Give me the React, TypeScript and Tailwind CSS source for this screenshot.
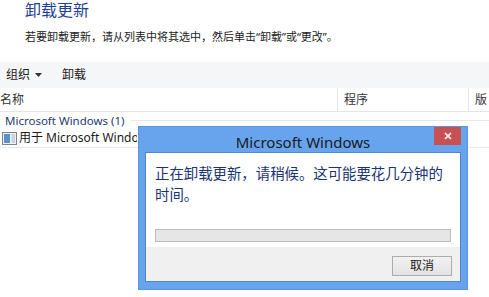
import React from 'react';

const ui = { fontFamily: '"Noto Sans", "Noto Sans CJK SC", sans-serif' };

function UpdateIcon() {
  return (
    <svg width="15" height="13" viewBox="0 0 15 13">
      <rect x="0.5" y="0.5" width="14" height="12" fill="#eef2f6" stroke="#7b8590" />
      <rect x="2" y="2" width="6" height="9" fill="#5d8fc9" />
      <rect x="9.5" y="2" width="3.5" height="9" fill="#c9d3dd" />
    </svg>
  );
}

export default function App() {
  return (
    <div className="relative w-[489px] h-[297px] overflow-hidden bg-white text-[#1a1a1a]" style={ui}>
      {/* page heading */}
      <div className="pl-[25px]">
        <h1 className="text-[16px] leading-[20px] text-[#1e3f96]">卸载更新</h1>
        <p className="mt-[9px] text-[11px] leading-[16px] text-[#222]">
          若要卸载更新，请从列表中将其选中，然后单击“卸载”或“更改”。
        </p>
      </div>

      {/* toolbar */}
      <div className="mt-[17px] h-[26px] bg-[#f5f6f7] flex items-center gap-[20px] pl-[6px] text-[12px] text-[#1a1a1a]">
        <span className="flex items-center gap-[5px]">
          组织
          <svg width="7" height="4" viewBox="0 0 7 4"><path d="M0 0h7L3.5 4z" fill="#333" /></svg>
        </span>
        <span>卸载</span>
      </div>

      {/* column headers */}
      <div className="flex h-[24px] border-b border-[#e5e5e5] text-[12px] leading-[24px] text-[#333] whitespace-nowrap">
        <div className="w-[338px] shrink-0 border-r border-[#e5e5e5]">名称</div>
        <div className="w-[131px] shrink-0 pl-[6px] border-r border-[#e5e5e5]">程序</div>
        <div className="pl-[6px]">版</div>
      </div>

      {/* group */}
      <div className="flex items-center h-[17px] pl-[5px] gap-[6px]">
        <span className="text-[11.5px] leading-[17px] text-[#1e3a6e]">Microsoft Windows (1)</span>
        <div className="flex-1 h-px bg-[#e3e8ef]" />
      </div>

      {/* item row */}
      <div className="flex items-center h-[19px] pl-[2px] gap-[2px] border-b border-[#eaeaea] text-[12px] whitespace-nowrap">
        <UpdateIcon />
        <span className="w-[118px] overflow-hidden">用于 Microsoft Windows</span>
      </div>

      {/* dialog */}
      <div className="absolute left-[138px] top-[126px] w-[330px] h-[164px] bg-[#68a4ee] border border-[#5b95de] flex flex-col px-[6px] pb-[7px]">
        <div className="relative h-[25px] flex items-center justify-center pt-[6px]">
          <span className="text-[15px] text-[#1a1a1a]">Microsoft Windows</span>
          <div className="absolute right-0 top-0 w-[27px] h-[18px] bg-[#c75050] flex items-center justify-center">
            <svg width="8" height="8" viewBox="0 0 8 8"><path d="M1 1l6 6M7 1l-6 6" stroke="#fff" strokeWidth="1.6" /></svg>
          </div>
        </div>
        <div className="flex-1 flex flex-col border border-[#4f86c6]">
          <div className="flex-1 bg-white px-[9px] pt-[9px]">
            <p className="text-[14.4px] leading-[21px] text-[#1a3372]" style={{ fontFamily: '"Noto Sans CJK SC", sans-serif' }}>
              正在卸载更新，请稍候。这可能要花几分钟的时间。
            </p>
            <div className="mt-[25px] h-[13px] bg-[#e6e6e6] border border-[#bcbcbc]" />
          </div>
          <div className="h-[34px] bg-[#f0f0f0] flex items-start justify-end pr-[8px] pt-[9px]">
            <div className="w-[60px] h-[20px] border border-[#acacac] bg-gradient-to-b from-[#f2f2f2] to-[#e3e3e3] flex items-center justify-center text-[12px] text-[#1a1a1a]">
              取消
            </div>
          </div>
        </div>
      </div>
    </div>
  );
}
